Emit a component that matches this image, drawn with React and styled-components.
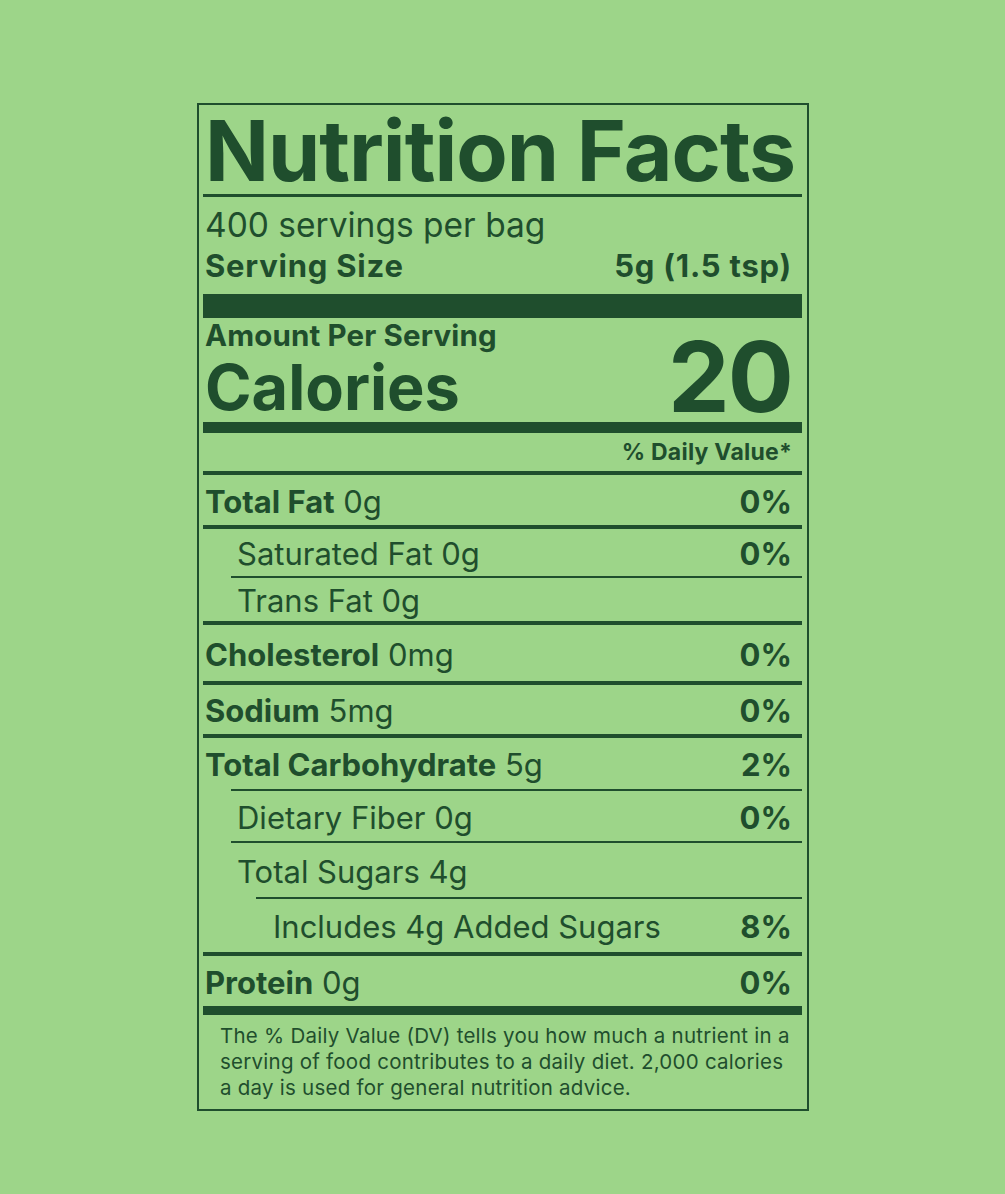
import React from 'react'
import styled, { createGlobalStyle } from 'styled-components'

const ink = '#1f4e2d'

const GlobalStyle = createGlobalStyle`
    html, body {
        margin: 0;
        padding: 0;
        background: #9dd589;
    }
    * {
        box-sizing: border-box;
    }
`

const rows = [
    { name: 'Total Fat', amount: '0g', dv: '0%', bold: true, h: 50, rule: { w: 4, indent: 0 } },
    { name: 'Saturated Fat', amount: '0g', dv: '0%', level: 1, h: 47, rule: { w: 2, indent: 28 } },
    { name: 'Trans Fat', amount: '0g', level: 1, h: 43, rule: { w: 4, indent: 0 } },
    { name: 'Cholesterol', amount: '0mg', dv: '0%', bold: true, h: 56, rule: { w: 4, indent: 0 } },
    { name: 'Sodium', amount: '5mg', dv: '0%', bold: true, h: 49, rule: { w: 4, indent: 0 } },
    { name: 'Total Carbohydrate', amount: '5g', dv: '2%', bold: true, h: 51, rule: { w: 2, indent: 28 } },
    { name: 'Dietary Fiber', amount: '0g', dv: '0%', level: 1, h: 50, rule: { w: 2, indent: 28 } },
    { name: 'Total Sugars', amount: '4g', level: 1, h: 54, rule: { w: 2, indent: 53 } },
    { name: 'Includes 4g Added Sugars', level: 2, dv: '8%', h: 53, rule: { w: 4, indent: 0 } },
    { name: 'Protein', amount: '0g', dv: '0%', bold: true, h: 50, rule: { w: 9, indent: 0 } },
]

export default function App() {
    return (
        <Page>
            <GlobalStyle />
            <Label>
                <Title>Nutrition Facts</Title>
                <Rule $w={3} />
                <Servings>400 servings per bag</Servings>
                <ServingRow>
                    <span>Serving Size</span>
                    <span>5g (1.5 tsp)</span>
                </ServingRow>
                <Rule $w={24} />
                <CaloriesBlock>
                    <div>
                        <Amount>Amount Per Serving</Amount>
                        <CaloriesLabel>Calories</CaloriesLabel>
                    </div>
                    <CaloriesValue>20</CaloriesValue>
                </CaloriesBlock>
                <Rule $w={11} />
                <DailyHead>% Daily Value*</DailyHead>
                <Rule $w={4} />
                {rows.map((r) => (
                    <React.Fragment key={r.name}>
                        <Row $h={r.h} $level={r.level || 0}>
                            <Name>
                                {r.bold ? <b>{r.name}</b> : r.name}
                                {r.amount && <span> {r.amount}</span>}
                            </Name>
                            {r.dv && <Dv>{r.dv}</Dv>}
                        </Row>
                        <Rule $w={r.rule.w} $indent={r.rule.indent} />
                    </React.Fragment>
                ))}
                <Footnote>
                    The % Daily Value (DV) tells you how much a nutrient in a<br />
                    serving of food contributes to a daily diet. 2,000 calories<br />
                    a day is used for general nutrition advice.
                </Footnote>
            </Label>
        </Page>
    )
}

const Page = styled.div`
    width: 1005px;
    height: 1194px;
    padding: 103px 0 0 197px;
    background: #9dd589;
    font-family: Inter, 'Liberation Sans', sans-serif;
    color: ${ink};
`

const Label = styled.div`
    width: 612px;
    height: 1008px;
    border: 2px solid ${ink};
    padding: 0 5px 0 4px;
    display: flex;
    flex-direction: column;
`

const Title = styled.h1`
    margin: 0;
    height: 89px;
    padding-top: 4px;
    font-size: 84px;
    line-height: 84px;
    font-weight: 700;
    letter-spacing: -0.012em;
    white-space: nowrap;
    padding-left: 2px;
`

const Rule = styled.div`
    height: ${(p) => p.$w}px;
    margin-left: ${(p) => p.$indent || 0}px;
    background: ${ink};
    flex-shrink: 0;
`

const Servings = styled.div`
    margin-top: 10px;
    font-size: 33.5px;
    line-height: 36px;
    padding-left: 2px;
`

const ServingRow = styled.div`
    display: flex;
    justify-content: space-between;
    font-size: 31px;
    line-height: 34px;
    font-weight: 700;
    letter-spacing: 0.025em;
    padding: 0 10px 0 2px;
    margin-top: 6px;
    margin-bottom: 11px;
`

const CaloriesBlock = styled.div`
    display: flex;
    justify-content: space-between;
    align-items: flex-end;
    height: 104px;
    padding: 0 10px 0 2px;
`

const Amount = styled.div`
    font-size: 29.5px;
    line-height: 28px;
    font-weight: 700;
    letter-spacing: 0.005em;
`

const CaloriesLabel = styled.div`
    font-size: 63px;
    line-height: 60px;
    font-weight: 700;
    margin-top: 8px;
    margin-bottom: 5px;
`

const CaloriesValue = styled.div`
    font-size: 98px;
    line-height: 98px;
    font-weight: 700;
    letter-spacing: -0.02em;
    margin-bottom: -4px;
`

const DailyHead = styled.div`
    height: 38px;
    display: flex;
    align-items: center;
    justify-content: flex-end;
    font-size: 23px;
    font-weight: 700;
    letter-spacing: 0.01em;
    padding: 0 10px 0 0;
`

const Row = styled.div`
    height: ${(p) => p.$h}px;
    display: flex;
    align-items: center;
    justify-content: space-between;
    padding: 2px 10px 0 ${(p) => 2 + [0, 32, 68][p.$level]}px;
    font-size: 31px;
    flex-shrink: 0;

    b {
        font-weight: 700;
    }
`

const Name = styled.div`
    white-space: nowrap;
`

const Dv = styled.div`
    font-weight: 700;
`

const Footnote = styled.p`
    margin: 8px 0 0 17px;
    font-size: 20.5px;
    line-height: 26px;
    letter-spacing: 0.012em;
    white-space: nowrap;
`
